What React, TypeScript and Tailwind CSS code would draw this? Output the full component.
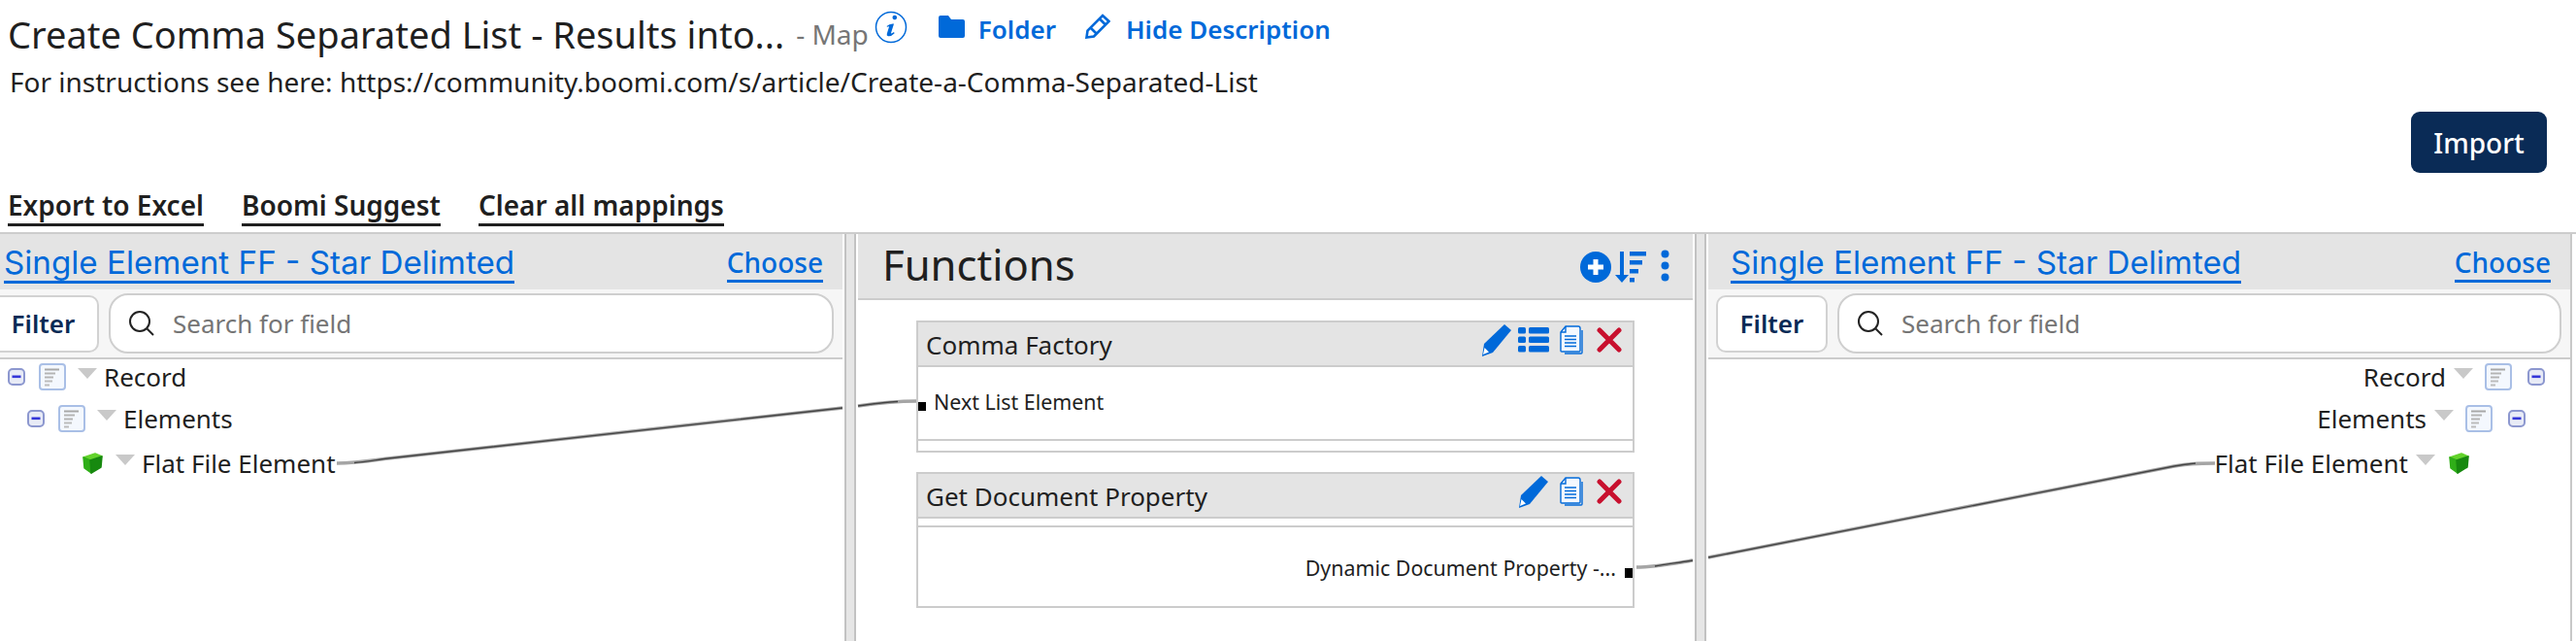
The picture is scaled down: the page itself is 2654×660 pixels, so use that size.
import { FC, ReactNode } from "react";

const NOTO = "font-['Noto_Sans',sans-serif]";

const MinusBox: FC = () => (
  <svg width="18" height="18" viewBox="0 0 18 18" className="shrink-0">
    <rect x="1" y="1" width="16" height="16" rx="4" fill="#e8ebf6" stroke="#8c97cf" strokeWidth="2" />
    <rect x="4.5" y="7.5" width="9" height="2.6" fill="#3436d8" />
  </svg>
);

const DocIcon: FC = () => (
  <svg width="28" height="28" viewBox="0 0 28 28" className="shrink-0">
    <rect x="1" y="1" width="26" height="26" rx="3" fill="#f4f8fe" stroke="#a9bfe6" strokeWidth="2" />
    <rect x="6" y="5.5" width="15" height="2" fill="#a8a8a8" />
    <rect x="6" y="9.5" width="11" height="2" fill="#b4b4b4" />
    <rect x="6" y="13.5" width="9" height="2" fill="#b4b4b4" />
    <rect x="6" y="17.5" width="8" height="2" fill="#bcbcbc" />
    <rect x="6" y="21.5" width="5" height="2" fill="#bcbcbc" />
  </svg>
);

const Arrow: FC = () => (
  <svg width="20" height="11" viewBox="0 0 20 11" className="shrink-0">
    <polygon points="0,0 20,0 10,11" fill="#c9c9c9" />
  </svg>
);

const Cube: FC = () => (
  <svg width="24" height="22" viewBox="0 0 24 22" className="shrink-0" strokeLinejoin="round" strokeWidth="1.5">
    <path d="M3 5 L15 1 L22 4 L10 8 Z" fill="#63d32c" stroke="#63d32c" />
    <path d="M3 5 L10 8 L11 21 L4 16 Z" fill="#2fae18" stroke="#2fae18" />
    <path d="M22 4 L10 8 L11 21 L21 15 Z" fill="#17890f" stroke="#17890f" />
  </svg>
);

const Pencil: FC<{ className?: string }> = ({ className }) => (
  <svg width="32" height="34" viewBox="0 0 32 34" className={className}>
    <path d="M24 1 L31 7 L12 30 L1 34 L3 21 Z" fill="#0069d9" />
    <path d="M3.5 25 L8 29.5 L2 32 Z" fill="#fff" />
  </svg>
);

const CopyDoc: FC = () => (
  <svg width="24" height="30" viewBox="0 0 24 30" fill="none" stroke="#0069d9" strokeWidth="1.4">
    <path d="M6 1 H19 Q21 1 21 3 V26 Q21 27 20 27 H2 Q1 27 1 26 V7 Z" fill="#f4f8fe" />
    <path d="M6 1 V7 H1" />
    <path d="M23 5 V28 Q23 29 22 29 H5" />
    <path d="M5 11 H17 M5 14.5 H17 M5 18 H17 M5 21.5 H17" />
  </svg>
);

const Cross: FC = () => (
  <svg width="26" height="26" viewBox="0 0 26 26" stroke="#c8102e" strokeWidth="5" strokeLinecap="round">
    <path d="M3 3 L23 23 M23 3 L3 23" />
  </svg>
);

const ListIcon: FC = () => (
  <svg width="32" height="26" viewBox="0 0 32 26" fill="#0069d9">
    <rect x="0" y="0" width="8" height="6.5" rx="1.5" />
    <rect x="11" y="0" width="21" height="6.5" rx="1.5" />
    <rect x="0" y="9.5" width="8" height="6.5" rx="1.5" />
    <rect x="11" y="9.5" width="21" height="6.5" rx="1.5" />
    <rect x="0" y="19" width="8" height="6.5" rx="1.5" />
    <rect x="11" y="19" width="21" height="6.5" rx="1.5" />
  </svg>
);

const SearchIcon: FC = () => (
  <svg width="28" height="28" viewBox="0 0 28 28" fill="none" stroke="#222" strokeWidth="2" className="shrink-0">
    <circle cx="12" cy="12" r="10" />
    <path d="M19.5 19.5 L26 26" />
  </svg>
);

const TreeRow: FC<{ right?: boolean; indent: number; icon: ReactNode; label: string; rowClass: string }> = ({
  right,
  indent,
  icon,
  label,
  rowClass,
}) =>
  right ? (
    <div className={`flex items-center justify-end text-[26px] leading-none text-[#1f1f1f] ${rowClass}`} style={{ paddingRight: indent }}>
      <span>{label}</span>
      <span className="-ml-[4px] mb-2">
        <Arrow />
      </span>
      {icon}
    </div>
  ) : (
    <div className={`flex items-center text-[26px] leading-none text-[#1f1f1f] ${rowClass}`} style={{ paddingLeft: indent }}>
      {icon}
      <span className="-mr-[5px] mb-2">
        <Arrow />
      </span>
      <span>{label}</span>
    </div>
  );

const ProfileHeader: FC<{ right?: boolean }> = ({ right }) => (
  <div className="flex h-[57px] items-start justify-between bg-[#e4e4e4]">
    <a className={`mt-[10px] border-b-[3px] border-[#0069d9] font-['Inter',sans-serif] text-[33.2px] leading-[38px] text-[#0069d9] ${right ? "ml-[23px]" : "ml-[4px]"}`}>
      Single Element FF - Star Delimted
    </a>
    <a className="mr-[20px] mt-[12px] border-b-[3px] border-[#0069d9] text-[28px] font-medium leading-[35px] text-[#0069d9]">
      Choose
    </a>
  </div>
);

const FilterBar: FC<{ className: string }> = ({ className }) => (
  <div className={`flex h-[72px] items-center gap-[10px] border-b-2 border-[#cccccc] bg-[#f6f6f6] ${className}`}>
    <button className="h-[59px] w-[115px] rounded-[10px] border-2 border-[#d2d2d2] bg-white text-[26px] font-semibold text-[#0a2b56]">
      Filter
    </button>
    <div className="flex h-[62px] flex-1 items-center gap-[18px] rounded-[20px] border-2 border-[#cfcfcf] bg-white pl-[18px]">
      <SearchIcon />
      <span className="text-[26px] text-[#757575]">Search for field</span>
    </div>
  </div>
);

const ProfilePanel: FC<{ right?: boolean; className: string }> = ({ right, className }) => (
  <section className={`h-full overflow-hidden ${className}`}>
    <ProfileHeader right={right} />
    <FilterBar className={right ? "pl-[8px] pr-[9px]" : "-ml-[13px] pr-[9px]"} />
    <div className="pt-[1px]">
      {right ? (
        <>
          <TreeRow right indent={26} rowClass="h-[34px] gap-[12px]" icon={<><DocIcon /><span className="ml-[4px]"><MinusBox /></span></>} label="Record" />
          <TreeRow right indent={46} rowClass="mt-[9px] h-[34px] gap-[12px]" icon={<><DocIcon /><span className="ml-[4px]"><MinusBox /></span></>} label="Elements" />
          <TreeRow right indent={103} rowClass="mt-[12px] h-[34px] gap-[12px]" icon={<Cube />} label="Flat File Element" />
        </>
      ) : (
        <>
          <TreeRow indent={8} rowClass="h-[34px] gap-[12px]" icon={<><MinusBox /><span className="ml-[2px]"><DocIcon /></span></>} label="Record" />
          <TreeRow indent={28} rowClass="mt-[9px] h-[34px] gap-[12px]" icon={<><MinusBox /><span className="ml-[2px]"><DocIcon /></span></>} label="Elements" />
          <TreeRow indent={83} rowClass="mt-[12px] h-[34px] gap-[12px]" icon={<Cube />} label="Flat File Element" />
        </>
      )}
    </div>
  </section>
);

const FunctionCard: FC<{ title: string; list?: boolean; children: ReactNode }> = ({ title, list, children }) => (
  <div className="border-2 border-[#cccccc] bg-white">
    <div className="flex h-[46px] items-start justify-between border-b-2 border-[#cccccc] bg-[#e4e4e4]">
      <span className="ml-[8px] mt-[6px] text-[26px] leading-[34px] text-[#1f1f1f]">{title}</span>
      <div className="mr-[11px] mt-[1px] flex items-center gap-[6px]">
        <Pencil />
        {list && <ListIcon />}
        <span className="ml-[5px]">
          <CopyDoc />
        </span>
        <span className="ml-[8px]">
          <Cross />
        </span>
      </div>
    </div>
    {children}
  </div>
);

const Divider: FC = () => (
  <div className="mx-[2px] h-full w-[12px] shrink-0 border-x-[2px] border-[#c2c2c2] bg-[#e6e6e6]" />
);

const App: FC = () => {
  return (
    <div className={`relative h-[660px] w-[2654px] overflow-hidden bg-white ${NOTO}`}>
      <div className="h-[239px]">
        <div className="flex items-start pl-[8px] pt-[10px]">
          <h1 className="text-[38px] leading-[50px] text-[#1f1f1f]">Create Comma Separated List - Results into...</h1>
          <span className="ml-[12px] mt-[6px] text-[28px] leading-[38px] text-[#767676]">- Map</span>
          <svg width="34" height="34" viewBox="0 0 34 34" className="ml-[6px] mt-[1px]">
            <circle cx="17" cy="17" r="15.5" fill="none" stroke="#0069d9" strokeWidth="1.5" />
            <path d="M18.5 7 a2.3 2.3 0 1 1 0 .01 Z M12.5 16 q3 -3 7.5 -2.5 l-3 9.5 q0 1.2 3 -1 l.6 1.3 q-3.5 3.5 -6.5 3 q-2 -.5 -1.3 -2.5 l2.3 -7.5 q-.5 -.5 -2 .5 Z" fill="#0069d9" />
          </svg>
          <a className="ml-[32px] mt-[2px] flex items-center text-[26px] font-semibold leading-[36px] text-[#0069d9]">
            <svg width="27" height="23" viewBox="0 0 27 23" className="mr-[14px] -mt-[6px]" fill="#0069d9">
              <path d="M0 2 Q0 0 2 0 H10 L13 4 H25 Q27 4 27 6 V21 Q27 23 25 23 H2 Q0 23 0 21 Z" />
            </svg>
            Folder
          </a>
          <a className="ml-[30px] mt-[2px] flex items-center text-[26px] font-semibold leading-[36px] text-[#0069d9]">
            <svg width="26" height="26" viewBox="0 0 26 26" className="mr-[16px] -mt-[6px]" fill="none" stroke="#0069d9" strokeWidth="2.6">
              <path d="M18 2 L24.5 8 L9 23.5 L1.5 24.5 L2.5 17.5 Z M15 5.5 L21 11.5 M6 15 L11.5 20.5" />
            </svg>
            Hide Description
          </a>
        </div>
        <p className="mt-[4px] pl-[10px] text-[28px] leading-[40px] text-[#1f1f1f]">
          For instructions see here: https://community.boomi.com/s/article/Create-a-Comma-Separated-List
        </p>
        <div className="flex justify-end pr-[30px]">
          <button className="mt-[11px] h-[63px] w-[140px] rounded-[9px] bg-[#0a2b56] text-[28px] font-medium text-white">Import</button>
        </div>
        <div className="mt-[14px] flex gap-[39px] pl-[8px] text-[28px] font-semibold leading-[38px] text-[#1f1f1f]">
          <a className="border-b-[3px] border-[#1f1f1f]">Export to Excel</a>
          <a className="border-b-[3px] border-[#1f1f1f]">Boomi Suggest</a>
          <a className="border-b-[3px] border-[#1f1f1f]">Clear all mappings</a>
        </div>
      </div>

      <div className="flex h-[421px] border-t-2 border-[#cccccc]">
        <ProfilePanel className="w-[868px] shrink-0" />
        <Divider />
        <section className="h-full flex-1">
          <div className="flex h-[68px] items-start justify-between border-b-2 border-[#cccccc] bg-[#e4e4e4] pl-[25px] pr-[24px]">
            <h2 className="mt-[1px] text-[43.6px] leading-[60px] text-[#1f1f1f]">Functions</h2>
            <div className="mt-[16px] flex items-start text-[#0069d9]">
              <svg width="32" height="32" viewBox="0 0 32 32" className="mt-[2px]">
                <circle cx="16" cy="16" r="16" fill="#0069d9" />
                <path d="M16 8 V24 M8 16 H24" stroke="#fff" strokeWidth="5" />
              </svg>
              <svg width="32" height="32" viewBox="0 0 32 32" className="ml-[4px] mt-[2px]" fill="#0069d9">
                <rect x="5" y="0" width="4" height="26" />
                <polygon points="0,24 14,24 7,32" />
                <rect x="15" y="0" width="17" height="4.5" />
                <rect x="15" y="9" width="13" height="4.5" />
                <rect x="15" y="18" width="9" height="4.5" />
                <rect x="15" y="27" width="5" height="4.5" />
              </svg>
              <svg width="9" height="34" viewBox="0 0 9 34" className="ml-[15px]" fill="#0069d9">
                <circle cx="4.5" cy="4.5" r="4" />
                <circle cx="4.5" cy="16.5" r="4" />
                <circle cx="4.5" cy="28.5" r="4" />
              </svg>
            </div>
          </div>
          <div className="flex flex-col gap-[20px] pl-[60px] pr-[60px] pt-[21px]">
            <FunctionCard title="Comma Factory" list>
              <div className="flex h-[76px] items-start border-b-2 border-[#cccccc] pt-[22px] text-[21.4px] leading-[27px] text-[#1f1f1f]">
                <span className="mr-[8px] mt-[14px] h-[9px] w-[8px] bg-black" />
                <span>Next List Element</span>
              </div>
              <div className="h-[10px]" />
            </FunctionCard>
            <FunctionCard title="Get Document Property">
              <div className="h-[9px] border-b-2 border-[#cccccc]" />
              <div className="flex h-[81px] items-start justify-end pt-[28px] text-[21.4px] leading-[27px] text-[#1f1f1f]">
                <span>Dynamic Document Property -...</span>
                <span className="ml-[9px] mt-[14px] h-[10px] w-[8px] bg-black" />
              </div>
            </FunctionCard>
          </div>
        </section>
        <Divider />
        <ProfilePanel right className="w-[888px] shrink-0" />
        <div className="h-full w-[2px] shrink-0 bg-[#c8c8c8]" />
        <div className="w-[4px] shrink-0" />
      </div>

      {/* mapping lines */}
      <svg width="2654" height="660" viewBox="0 0 2654 660" fill="none" className="pointer-events-none absolute left-0 top-0">
        <g stroke="#a5a5a5" strokeWidth="3.5">
          <path d="M347 477 C365 477 370 476 400 472 L868 420" />
          <path d="M884 418 C905 415 925 413 944 413" />
          <path d="M1686 584 C1705 584 1725 580 1744 577" />
          <path d="M1760 574 L2240 480 C2255 477 2265 477 2282 477" />
        </g>
        <g stroke="#444" strokeWidth="1.3">
          <path d="M365 476.5 C375 476 385 474 400 472 L868 420" />
          <path d="M884 418 C905 415 915 414 925 413.5" />
          <path d="M1705 583 C1715 581 1725 580 1744 577" />
          <path d="M1760 574 L2240 480 C2250 478 2255 477.5 2262 477" />
        </g>
      </svg>
    </div>
  );
};

export default App;
